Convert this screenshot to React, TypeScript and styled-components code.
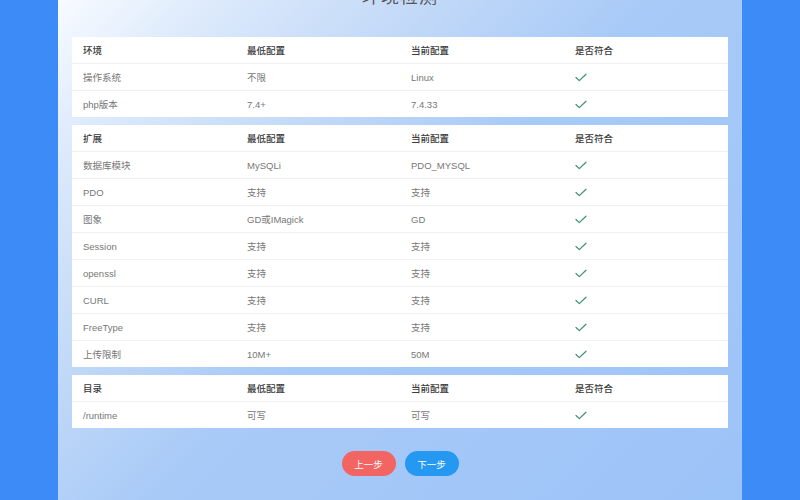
import styled, { createGlobalStyle } from "styled-components";

const GlobalStyle = createGlobalStyle`
  html, body {
    margin: 0;
    padding: 0;
    overflow: hidden;
  }
  body {
    font-family: "Liberation Sans", "Noto Sans CJK SC", sans-serif;
  }
`;

type Row = [string, string, string];

interface Section {
  title: string;
  rows: Row[];
}

const sections: Section[] = [
  {
    title: "环境",
    rows: [
      ["操作系统", "不限", "Linux"],
      ["php版本", "7.4+", "7.4.33"],
    ],
  },
  {
    title: "扩展",
    rows: [
      ["数据库模块", "MySQLi", "PDO_MYSQL"],
      ["PDO", "支持", "支持"],
      ["图象", "GD或IMagick", "GD"],
      ["Session", "支持", "支持"],
      ["openssl", "支持", "支持"],
      ["CURL", "支持", "支持"],
      ["FreeType", "支持", "支持"],
      ["上传限制", "10M+", "50M"],
    ],
  },
  {
    title: "目录",
    rows: [["/runtime", "可写", "可写"]],
  },
];

const Page = styled.div`
  display: flex;
  width: 800px;
  height: 500px;
  background: #3d8bf7;
`;

const Side = styled.div`
  width: 58px;
  flex-shrink: 0;
`;

const Panel = styled.main`
  flex: 1;
  display: flex;
  flex-direction: column;
  padding: 0 14px;
  background: linear-gradient(
    135deg,
    #f8fbff 0%,
    #dbe9fb 14%,
    #c4daf8 30%,
    #a8caf7 50%,
    #9cc3f8 100%
  );
`;

const Title = styled.h2`
  margin: -15px 0 28px;
  height: 24px;
  line-height: 24px;
  text-align: center;
  font-size: 18px;
  font-weight: normal;
  color: #555;
  letter-spacing: 1px;
`;

const Table = styled.div`
  background: #fff;
  margin-bottom: 8px;
`;

const TableRow = styled.div<{ $head?: boolean }>`
  display: grid;
  grid-template-columns: repeat(4, 1fr);
  height: 26px;
  align-items: center;
  border-bottom: 1px solid #f0f0f0;
  font-size: 9.5px;
  color: ${({ $head }) => ($head ? "#3a3a3a" : "#777")};
  font-weight: ${({ $head }) => ($head ? 500 : "normal")};

  &:last-child {
    border-bottom: none;
  }
`;

const Cell = styled.div`
  padding-left: 11px;
`;

const Check = styled.svg`
  display: block;
  width: 12px;
  height: 9px;
`;

const Actions = styled.div`
  display: flex;
  justify-content: center;
  gap: 9px;
  margin-top: 15px;
`;

const Button = styled.button<{ $tone: "prev" | "next" }>`
  width: 54px;
  height: 25px;
  border: none;
  border-radius: 13px;
  padding: 0;
  font-family: inherit;
  font-size: 9.5px;
  color: #fff;
  background: ${({ $tone }) => ($tone === "prev" ? "#f26563" : "#2598f2")};
  cursor: pointer;
`;

const Tick = () => (
  <Check viewBox="0 0 12 9">
    <polyline
      points="1,4.5 4.3,7.6 11,1.2"
      fill="none"
      stroke="#3d8f74"
      strokeWidth="1.2"
      strokeLinecap="round"
      strokeLinejoin="round"
    />
  </Check>
);

export default function App() {
  return (
    <>
      <GlobalStyle />
      <Page>
        <Side />
        <Panel>
          <Title>环境检测</Title>
          {sections.map((s) => (
            <Table key={s.title}>
              <TableRow $head>
                <Cell>{s.title}</Cell>
                <Cell>最低配置</Cell>
                <Cell>当前配置</Cell>
                <Cell>是否符合</Cell>
              </TableRow>
              {s.rows.map((r) => (
                <TableRow key={r[0]}>
                  <Cell>{r[0]}</Cell>
                  <Cell>{r[1]}</Cell>
                  <Cell>{r[2]}</Cell>
                  <Cell>
                    <Tick />
                  </Cell>
                </TableRow>
              ))}
            </Table>
          ))}
          <Actions>
            <Button $tone="prev">上一步</Button>
            <Button $tone="next">下一步</Button>
          </Actions>
        </Panel>
        <Side />
      </Page>
    </>
  );
}
